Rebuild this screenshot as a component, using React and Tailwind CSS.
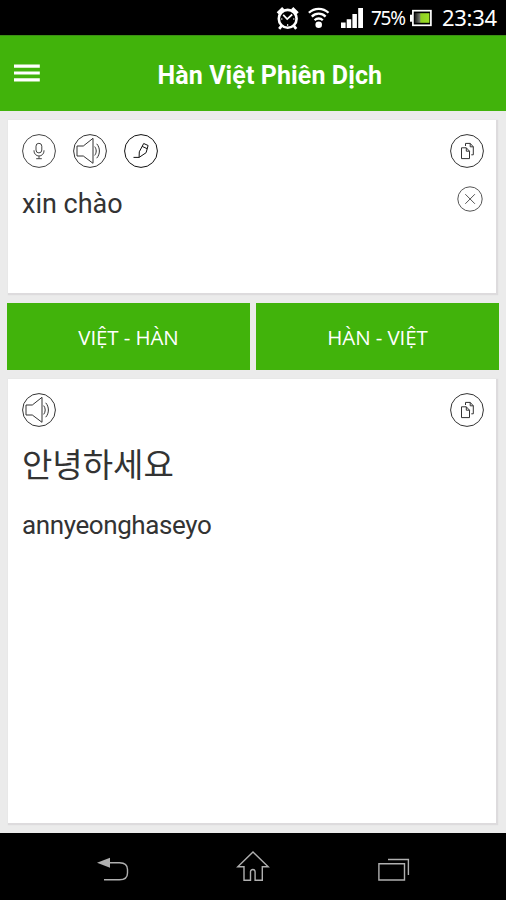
const LABELS = {
  title: 'Hàn Việt Phiên Dịch',
  vietToKorean: 'VIỆT - HÀN',
  koreanToViet: 'HÀN - VIỆT',
};

function StatusBar() {
  return (
    <div className="h-[35px] shrink-0 bg-black flex items-start text-white font-['Noto_Sans',sans-serif] pl-[276px]">
      <svg className="mt-[6px] h-6 w-6 shrink-0" viewBox="0 0 24 24" fill="none" stroke="#fff">
        <circle cx="11.7" cy="12.8" r="8.9" strokeWidth="2.6" />
        <path d="M1.8 7.3 7.2 2.2M16.2 2.2l5.4 5.1" strokeWidth="3.2" />
        <path d="m5.8 19.5-2.6 3.3M17.6 19.5l2.6 3.3" strokeWidth="2.8" />
        <path d="m7.2 8.8 4 4.3 5-4.6" strokeWidth="1.7" />
        <path d="M11.7 18v2M5 13h1.5M17 13h1.5" strokeWidth="1" />
      </svg>
      <svg className="ml-2 mt-[6px] h-6 w-[22px] shrink-0" viewBox="0 0 22 24" fill="none" stroke="#fff" strokeWidth="2.3">
        <path d="M.9 6.8a14 14 0 0 1 19.6 0" />
        <path d="M3.8 10.6a9.7 9.7 0 0 1 13.8 0" />
        <path d="M6.6 14.2a5.8 5.8 0 0 1 8.2 0" />
        <circle cx="10.7" cy="18.7" r="3.3" fill="#fff" stroke="none" />
      </svg>
      <svg className="ml-[11px] mt-2 h-5 w-[24px] shrink-0" viewBox="2 0 24 20" fill="#fff">
        <path d="M2 14.5h4.6V20H2zM7.7 11.2h4.5V20H7.7zM13.4 6h4.5v14h-4.5zM19.2 0H24v20h-4.8z" />
      </svg>
      <span className="ml-[6px] mt-[5px] w-[37px] text-[19px] leading-[26px] tracking-[-1.3px]">75%</span>
      <svg className="ml-[2px] mt-[9px] h-[18px] w-[22px] shrink-0" viewBox="0 0 22 18" fill="none">
        <defs>
          <linearGradient id="charge">
            <stop offset="0" stopColor="#161616" />
            <stop offset="0.35" stopColor="#767a70" />
            <stop offset="0.42" stopColor="#8fd022" />
            <stop offset="1" stopColor="#9be024" />
          </linearGradient>
        </defs>
        <rect x="2.9" y="1.7" width="18" height="14.6" stroke="#fff" strokeWidth="1.7" />
        <path d="M0 5.7h2.5v7H0z" fill="#fff" />
        <path d="M4.6 4.2h14.8v9.6H4.6z" fill="url(#charge)" />
      </svg>
      <span className="ml-[10px] mt-[2px] text-[22px] leading-[30px] tracking-[-0.3px]">23:34</span>
    </div>
  );
}

function Header() {
  return (
    <header className="h-[76px] shrink-0 bg-[#41b30b] border-t border-[#3c8f15] flex items-start pl-[14px]">
      <svg className="mt-7 h-[19px] w-[26px]" viewBox="0 0 26 19" fill="#fff">
        <path d="M0 .5h25.8v3.2H0zM0 7.4h25.8v3.2H0zM0 14.3h25.8v3.2H0z" />
      </svg>
      <h1 className="ml-[117.5px] mt-[23px] text-[25px] leading-[34px] font-bold tracking-[0.1px] text-white whitespace-nowrap font-['Roboto',sans-serif]">
        {LABELS.title}
      </h1>
    </header>
  );
}

function RoundIcon({ color = '#222', children }) {
  return (
    <svg className="h-[34px] w-[34px] shrink-0" viewBox="0 0 34 34" fill="none" stroke={color} strokeWidth="1">
      <circle cx="17" cy="17" r="16.4" />
      {children}
    </svg>
  );
}

function MicIcon() {
  return (
    <RoundIcon color="#444">
      <rect x="14" y="9.3" width="5.8" height="9.6" rx="2.9" />
      <path d="M12 16.3v.7a5 5 0 0 0 10 0v-.7M17 22v2.7M14.2 24.7h5.6" />
    </RoundIcon>
  );
}

function SpeakerIcon() {
  return (
    <RoundIcon color="#333">
      <path d="M4 12h6.3L20 4.3v25l-9.7-7.3H4z" />
      <path d="M21.7 12.6c2 2.6 2 6.2 0 8.8M23.7 9.8c3.6 4 3.6 10.4 0 14.4" />
    </RoundIcon>
  );
}

function PencilIcon() {
  return (
    <RoundIcon color="#111">
      <path d="M9.5 23.4h5.6l.2-5.6 4.4-8.3 4.4 2-2 7.2-7 4.7M18.2 12.4l5 2.3" />
    </RoundIcon>
  );
}

function CopyIcon() {
  return (
    <RoundIcon color="#333">
      <path d="M11.5 13.8h4.8l3.2 3.4v7.4h-8zM16.3 13.8v3.4h3.2" />
      <path d="M15.5 12V9.4h4.7l3.1 3.4v8h-2M20.2 9.4v3.4h3.1" />
    </RoundIcon>
  );
}

function ClearIcon() {
  return (
    <svg className="mr-px h-[26px] w-[26px]" viewBox="0 0 26 26" fill="none" stroke="#555" strokeWidth="1">
      <circle cx="13" cy="13" r="12.2" />
      <path d="m8.3 8.2 9.6 9.6M17.9 8.2l-9.6 9.6" />
    </svg>
  );
}

function Card({ className, children }) {
  return (
    <section className={`bg-white ml-2 mr-[10px] pl-[14px] pr-[12.5px] shadow-[1px_1px_1px_1px_#dddbdd] ${className}`}>
      {children}
    </section>
  );
}

function NavBar() {
  return (
    <nav className="h-[67.5px] shrink-0 bg-black flex items-start pl-[96px] pt-[16.5px]">
      <svg className="h-8 w-[33px]" viewBox="96 849 33 32" fill="none" stroke="#b0b0b0" strokeWidth="1.4">
        <path d="M97 862.7l13-5v10z" fill="#b0b0b0" stroke="none" />
        <path d="M109 862.7h10.5c5.4 0 8 2.5 8 6.8v3.4c0 4.3-2.6 6.8-8 6.8H104" />
      </svg>
      <svg className="ml-[107px] h-[33px] w-[34px]" viewBox="236 849 34 33" fill="none" stroke="#b0b0b0" strokeWidth="1.4">
        <path d="M253 852l15.2 14.7h-5.9v13.5h-7.2v-8.4c0-3-4.6-3-4.6 0v8.4H244v-13.5h-6.2z" />
      </svg>
      <svg className="ml-[108px] h-[33px] w-8" viewBox="378 849 32 33" fill="none" stroke="#b0b0b0" strokeWidth="1.4">
        <path d="M378.9 863.8h25.6v16.2h-25.6zM388 859.5h20.4V875" />
      </svg>
    </nav>
  );
}

export default function App() {
  return (
    <div className="w-[506px] h-[900px] flex flex-col overflow-hidden bg-[#ebebeb] font-['Roboto',sans-serif] text-[#333]">
      <StatusBar />
      <Header />
      <main className="flex-1 flex flex-col pt-[9px]">
        <Card className="h-[173px] pt-[14px]">
          <div className="flex justify-between">
            <div className="flex gap-[17px]">
              <MicIcon />
              <SpeakerIcon />
              <PencilIcon />
            </div>
            <CopyIcon />
          </div>
          <div className="flex justify-between pt-[18px]">
            <p className="pt-px text-[27px] leading-[34px]">xin chào</p>
            <ClearIcon />
          </div>
        </Card>
        <div className="mt-[10px] px-[7px] grid grid-cols-2 gap-[6px] h-[67px] text-[20.5px] tracking-[-0.1px] text-white font-['Open_Sans',sans-serif]">
          <button className="bg-[#41b30b] pt-px">{LABELS.vietToKorean}</button>
          <button className="bg-[#41b30b] pt-px">{LABELS.koreanToViet}</button>
        </div>
        <Card className="mt-[9px] h-[444px] pt-[14px]">
          <div className="flex justify-between">
            <SpeakerIcon />
            <CopyIcon />
          </div>
          <p className="mt-[14px] text-[33px] leading-[44px] font-['Noto_Sans_CJK_KR',sans-serif]">안녕하세요</p>
          <p className="mt-[23px] text-[26px] leading-[34px] tracking-[-0.4px]">annyeonghaseyo</p>
        </Card>
      </main>
      <NavBar />
    </div>
  );
}
